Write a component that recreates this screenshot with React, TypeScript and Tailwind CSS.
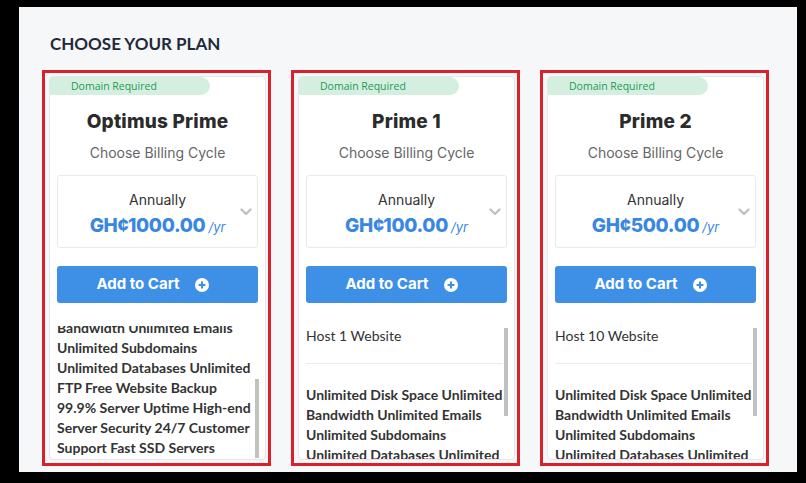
import { useEffect, useRef } from 'react';

type Plan = {
  name: string;
  price: string;
  host: string;
  scroll: number;
  thumbTop: number;
  thumbHeight: number;
};

const plans: Plan[] = [
  { name: 'Optimus Prime', price: 'GH¢1000.00', host: 'Host Unlimited Websites', scroll: 87, thumbTop: 53, thumbHeight: 79 },
  { name: 'Prime 1', price: 'GH¢100.00', host: 'Host 1 Website', scroll: 0, thumbTop: 2, thumbHeight: 88 },
  { name: 'Prime 2', price: 'GH¢500.00', host: 'Host 10 Website', scroll: 0, thumbTop: 2, thumbHeight: 88 },
];

const features =
  'Unlimited Disk Space Unlimited Bandwidth Unlimited Emails Unlimited Subdomains Unlimited Databases Unlimited FTP Free Website Backup 99.9% Server Uptime High-end Server Security 24/7 Customer Support Fast SSD Servers';

const geo = { fontFamily: 'Inter, "Noto Sans", sans-serif' };

const PlanCard = ({ plan }: { plan: Plan }) => {
  const listRef = useRef<HTMLDivElement>(null);

  useEffect(() => {
    if (listRef.current) listRef.current.scrollTop = plan.scroll;
  }, [plan.scroll]);

  return (
    <div className="w-[229px] h-[396px] border-[3px] border-[#d7212b] pt-[3px] pl-[4px] pr-[2px] pb-[3px]">
      <div className="h-full bg-white border border-[#e4e6ea] rounded-[4px] flex flex-col overflow-hidden">
        <div
          className="w-[160px] h-[18px] bg-[#d4efe0] rounded-r-full pl-[21px] text-[10.5px] leading-[18px] text-[#239a52]"
          style={{ fontFamily: '"Open Sans", sans-serif' }}
        >
          Domain Required
        </div>

        <h3 className="mt-[15px] text-center text-[19px] leading-[24px] font-extrabold text-[#2b2b2b] tracking-[0.2px]" style={geo}>
          {plan.name}
        </h3>
        <p className="mt-[9px] text-center text-[14px] leading-[20px] text-[#666]" style={geo}>
          Choose Billing Cycle
        </p>

        <div className="relative mx-[7px] mt-[12px] h-[73px] border border-[#e8e9ec] rounded-[3px] text-center" style={geo}>
          <div className="pt-[14px] text-[14px] leading-[20px] text-[#333]">Annually</div>
          <div className="mt-[4px] leading-[24px] text-[#3a87e2]">
            <span className="text-[19px] font-extrabold tracking-[-0.3px]">{plan.price}</span>
            <span className="ml-[3px] text-[13px] italic">/yr</span>
          </div>
          <svg className="absolute right-[5px] top-[32px]" width="12" height="8" viewBox="0 0 12 8" fill="none">
            <path d="M1.5 1.5L6 6L10.5 1.5" stroke="#bfc1c4" strokeWidth="2.4" strokeLinecap="round" strokeLinejoin="round" />
          </svg>
        </div>

        <button
          className="mx-[7px] mt-[18px] h-[37px] bg-[#3e8fe6] rounded-[3px] flex items-center justify-center gap-[15px] pr-[10px] text-white text-[15px] font-bold"
          style={geo}
        >
          Add to Cart
          <svg width="14" height="14" viewBox="0 0 14 14">
            <circle cx="7" cy="7" r="7" fill="white" />
            <path d="M7 3.6V10.4M3.6 7H10.4" stroke="#3e8fe6" strokeWidth="2" />
          </svg>
        </button>

        <div className="relative mt-[23px] flex-1 min-h-0">
          <div
            ref={listRef}
            className="h-full overflow-y-auto [scrollbar-width:none] pl-[7px] pr-[8px] text-[14px] leading-[20px] text-[#333]"
            style={{ fontFamily: 'Lato, "Liberation Sans", sans-serif' }}
          >
            <div>{plan.host}</div>
            <div className="mt-[17px] mr-[3px] border-t border-[#ececec]" />
            <p className="mt-[21px] font-bold pb-[8px]">{features}</p>
          </div>
          <div
            className="absolute right-[6px] w-[4px] bg-[#c1c1c1]"
            style={{ top: plan.thumbTop, height: plan.thumbHeight }}
          />
        </div>
      </div>
    </div>
  );
};

export default function App() {
  return (
    <div className="w-[806px] h-[483px] bg-black pt-[7px] pl-[19px] pr-[9px] pb-[11px]">
      <div className="h-full bg-[#f6f7f9] pt-[27px] pl-[23px] overflow-hidden">
        <h2
          className="pl-[8px] text-[17px] leading-[20px] font-bold text-[#1f2a3a]"
          style={{ fontFamily: 'Lato, "Liberation Sans", sans-serif' }}
        >
          CHOOSE YOUR PLAN
        </h2>
        <div className="mt-[16px] flex gap-[20px]">
          {plans.map((p) => (
            <PlanCard key={p.name} plan={p} />
          ))}
        </div>
      </div>
    </div>
  );
}
